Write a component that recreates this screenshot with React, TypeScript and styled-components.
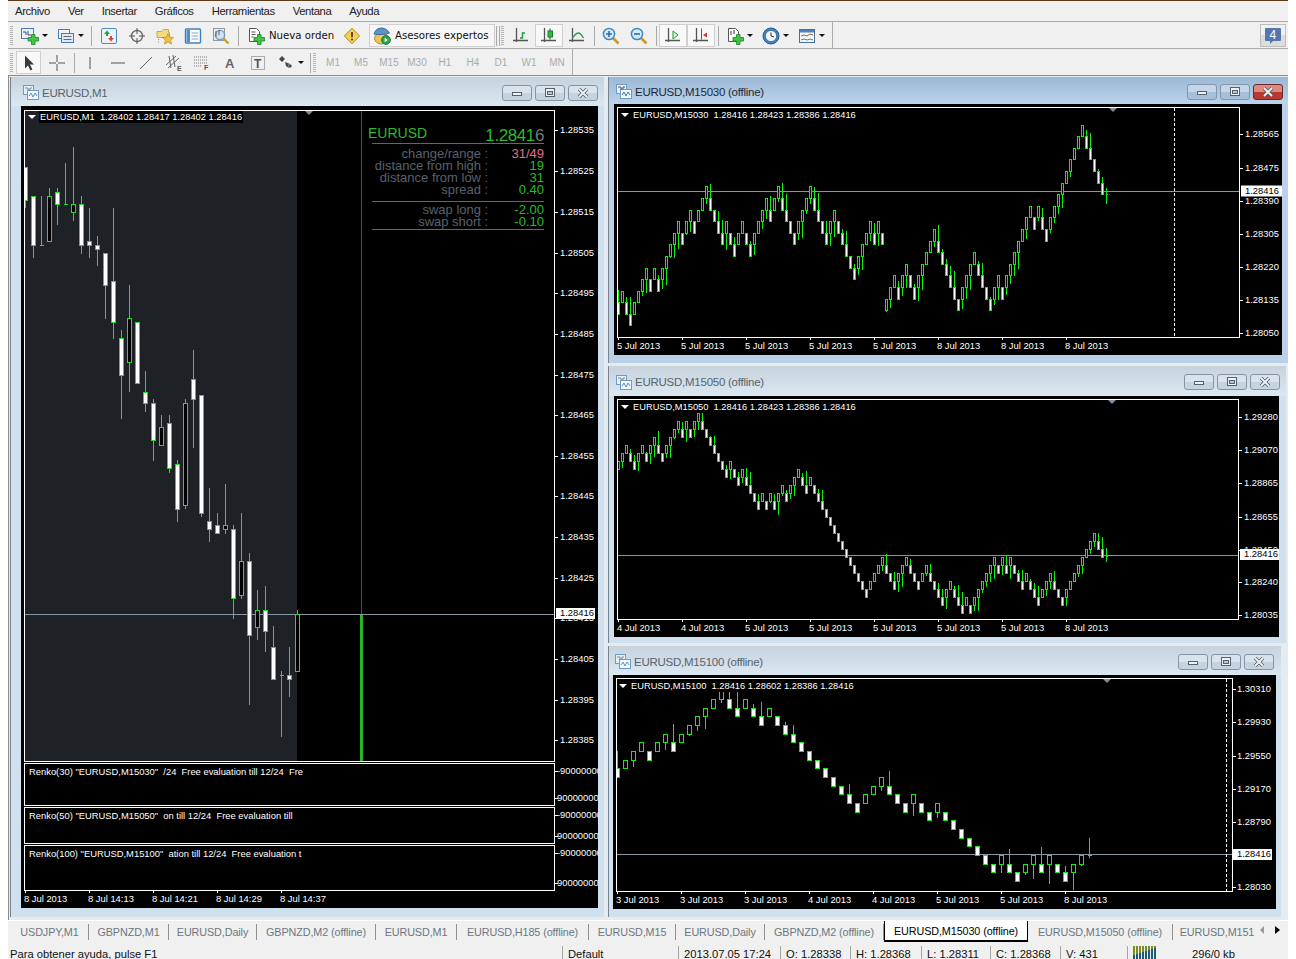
import React from 'react'
import styled, { createGlobalStyle } from 'styled-components'

const GlobalStyle = createGlobalStyle`
  html, body {
    margin: 0;
    background: #fff;
    overflow: hidden;
  }
`

const AppShell = styled.div`
  width: 1280px;
  height: 958px;
  margin: 0 8px;
  border-top: 1px solid #5c3c14;
  background: #f0f0f0;
  display: flex;
  flex-direction: column;
  overflow: hidden;
  font-family: "Liberation Sans", Arial, sans-serif;
  color: #111;
`

/* ---------- menu ---------- */
const MenuBar = styled.div`
  height: 20px;
  flex: none;
  display: flex;
  align-items: center;
  gap: 18px;
  padding-left: 7px;
  font-size: 11.3px;
  letter-spacing: -0.4px;
  color: #222;
`

/* ---------- toolbars ---------- */
const ToolRow = styled.div`
  height: 26px;
  flex: none;
  display: flex;
  align-items: center;
  border-top: 1px solid #aaa;
  padding-left: 2px;
  position: relative;
`
const ToolGroup = styled.div<{ $w: number }>`
  width: ${(p) => p.$w}px;
  height: 26px;
  box-sizing: border-box;
  padding-top: 1px;
  display: flex;
  align-items: center;
  border-right: 1px solid #aaa;
`
const Grip = styled.div`
  width: 3px;
  height: 20px;
  margin: 0 3px 0 0;
  flex: none;
  background: repeating-linear-gradient(to bottom, #b5b5b5 0 1px, transparent 1px 2px);
`
const Tool = styled.div<{ $w?: number; $pressed?: boolean }>`
  width: ${(p) => p.$w ?? 28}px;
  height: 23px;
  flex: none;
  box-sizing: border-box;
  display: flex;
  align-items: center;
  justify-content: center;
  gap: 3px;
  border: 1px solid ${(p) => (p.$pressed ? '#cfcfcf' : 'transparent')};
  background: ${(p) => (p.$pressed ? '#f8f8f8' : 'transparent')};
`
const Caret = styled.span`
  width: 0;
  height: 0;
  border-left: 3px solid transparent;
  border-right: 3px solid transparent;
  border-top: 3px solid #111;
`
const Sep = styled.div<{ $m?: number }>`
  width: 1px;
  height: 20px;
  flex: none;
  background: #a9a9a9;
  margin: 0 ${(p) => p.$m ?? 3}px;
`
const ToolLabel = styled.span`
  font-family: "DejaVu Sans", sans-serif;
  font-size: 10.2px;
  color: #111;
  white-space: nowrap;
`
const TextTool = styled.div<{ $w: number; $boxed?: boolean }>`
  width: ${(p) => p.$w}px;
  height: 23px;
  flex: none;
  box-sizing: border-box;
  display: flex;
  align-items: center;
  gap: 4px;
  margin-left: ${(p) => (p.$boxed ? 4 : 0)}px;
  padding-left: ${(p) => (p.$boxed ? 3 : 4)}px;
  border: 1px solid ${(p) => (p.$boxed ? '#cfcfcf' : 'transparent')};
  background: ${(p) => (p.$boxed ? '#f6f6f6' : 'transparent')};
`
const Period = styled.span`
  width: 28px;
  flex: none;
  text-align: center;
  font-size: 10px;
  color: #ababab;
`
const NoticeButton = styled.div`
  position: absolute;
  right: 2px;
  top: 2px;
  width: 26px;
  height: 23px;
  box-sizing: border-box;
  border: 1px solid #bdbdbd;
  background: linear-gradient(#f1f1f1 50%, #dcdcdc 50%);
  display: flex;
  align-items: center;
  justify-content: center;
`

/* ---------- MDI windows ---------- */
const Desktop = styled.div`
  height: 845px;
  flex: none;
  box-sizing: border-box;
  border-top: 1px solid #8d8d8d;
  border-left: 1px solid #8d8d8d;
  padding: 1px 0 0 1px;
  display: flex;
  gap: 4px;
  background: #e6ebf0;
`
const RightColumn = styled.div`
  display: flex;
  flex-direction: column;
  gap: 3px;
`
const Win = styled.div<{ $w: number; $h: number; $active?: boolean }>`
  width: ${(p) => p.$w}px;
  height: ${(p) => p.$h}px;
  flex: none;
  display: flex;
  flex-direction: column;
  box-sizing: border-box;
  border-left: 1px solid #77828c;
  background: ${(p) => (p.$active ? '#b9d1e9' : '#cfe0ee')};
`
const TitleBar = styled.div<{ $h: number; $pad: number; $active?: boolean }>`
  height: ${(p) => p.$h}px;
  flex: none;
  box-sizing: border-box;
  display: flex;
  align-items: center;
  gap: 3px;
  padding: 2px 0 0 ${(p) => p.$pad}px;
  background: ${(p) =>
    p.$active
      ? 'linear-gradient(#9ab7d4, #bcd4ec)'
      : 'linear-gradient(#c6d3dd, #dbe7f1)'};
`
const TitleText = styled.span<{ $active?: boolean }>`
  flex: 1;
  font-size: 11.5px;
  letter-spacing: -0.25px;
  color: ${(p) => (p.$active ? '#1b2a3a' : '#59636d')};
`
const WinButtons = styled.div<{ $right: number }>`
  display: flex;
  gap: 3px;
  margin-right: ${(p) => p.$right}px;
`
const WinButton = styled.div<{ $close?: boolean; $active?: boolean }>`
  width: 30px;
  height: 16px;
  box-sizing: border-box;
  border: 1px solid ${(p) => (p.$close && p.$active ? '#6b2a30' : '#8595a5')};
  border-radius: 3px;
  display: flex;
  align-items: center;
  justify-content: center;
  background: ${(p) =>
    p.$close && p.$active
      ? 'linear-gradient(#dd8a7e 50%, #b8392e 50%)'
      : p.$active
      ? 'linear-gradient(#c3d6ea 50%, #a6c0da 50%)'
      : 'linear-gradient(#d9e3ec 50%, #c4d3e0 50%)'};
`
const ChartFrame = styled.div<{ $h: number; $ml: number; $mr: number }>`
  height: ${(p) => p.$h}px;
  margin: 0 ${(p) => p.$mr}px 0 ${(p) => p.$ml}px;
  flex: none;
  position: relative;
  background: #000;
  overflow: hidden;
`
const ChartSvg = styled.svg`
  display: block;
  width: 100%;
  height: 100%;
  text {
    font-family: "Liberation Sans", Arial, sans-serif;
    font-size: 9.4px;
    fill: #fff;
    white-space: pre;
  }
`
const Legend = styled.div<{ $left: number }>`
  position: absolute;
  left: ${(p) => p.$left}px;
  top: 5px;
  height: 12px;
  display: flex;
  align-items: center;
  gap: 3px;
  font-size: 9.3px;
  color: #fff;
  white-space: pre;
`
const LegendArrow = styled.span`
  width: 0;
  height: 0;
  border-left: 4px solid transparent;
  border-right: 4px solid transparent;
  border-top: 4px solid #fff;
`
const LegendText = styled.span`
  background: #000;
  padding: 0 1px;
  line-height: 12px;
`

/* ---------- info panel of the M1 chart ---------- */
const InfoPanel = styled.div`
  position: absolute;
  left: 351px;
  top: 20px;
  width: 172px;
  color: #58626c;
  font-size: 13px;
`
const InfoHead = styled.div`
  height: 17px;
  margin-left: -4px;
  display: flex;
  justify-content: space-between;
  align-items: flex-start;
  line-height: 15px;
  color: #2bbb2b;
  font-size: 14px;
`
const InfoPrice = styled.span`
  font-size: 17px;
  letter-spacing: -0.4px;
  line-height: 17px;
  margin-top: 1px;
  span {
    color: #777;
  }
`
const InfoBlock = styled.div`
  border-top: 1px solid #666;
  padding: 4px 0 5px;
  &:last-child {
    border-bottom: 1px solid #666;
    padding: 2px 0 1px;
  }
`
const InfoRow = styled.div`
  display: grid;
  grid-template-columns: 109px 12px 1fr;
  line-height: 12px;
  height: 12px;
  white-space: nowrap;
`
const InfoLabel = styled.span`
  text-align: right;
`
const InfoValue = styled.span<{ $pink?: boolean }>`
  text-align: right;
  color: ${(p) => (p.$pink ? '#e46f8d' : '#2bbb2b')};
`

/* ---------- tabs + status ---------- */
const TabBar = styled.div`
  height: 22px;
  flex: none;
  display: flex;
  align-items: stretch;
  padding-left: 3px;
  position: relative;
  border-top: 1px solid #fff;
`
const Tab = styled.div<{ $w: number; $active?: boolean; $last?: boolean }>`
  width: ${(p) => p.$w}px;
  flex: none;
  box-sizing: border-box;
  display: flex;
  align-items: center;
  justify-content: center;
  font-size: 10.8px;
  letter-spacing: -0.1px;
  white-space: nowrap;
  overflow: hidden;
  margin-top: ${(p) => (p.$active ? 0 : 3)}px;
  margin-bottom: ${(p) => (p.$active ? 1 : 3)}px;
  color: ${(p) => (p.$active ? '#000' : '#6c7680')};
  background: ${(p) => (p.$active ? '#fff' : 'transparent')};
  border-right: ${(p) => (p.$last ? '0' : `1px solid ${p.$active ? '#000' : '#8f8f8f'}`)};
  border-left: ${(p) => (p.$active ? '1px solid #000' : '0')};
  border-bottom: ${(p) => (p.$active ? '2px solid #000' : '0')};
`
const TabArrows = styled.div`
  position: absolute;
  right: 8px;
  top: 5px;
  display: flex;
  gap: 11px;
  align-items: center;
`
const TabArrow = styled.span<{ $right?: boolean; $off?: boolean }>`
  width: 0;
  height: 0;
  border-top: 4px solid transparent;
  border-bottom: 4px solid transparent;
  border-left: ${(p) => (p.$right ? `5px solid ${p.$off ? '#999' : '#000'}` : '0')};
  border-right: ${(p) => (p.$right ? '0' : `4px solid ${p.$off ? '#999' : '#000'}`)};
`
const StatusBar = styled.div`
  flex: 1;
  display: flex;
  align-items: flex-start;
  padding-top: 3px;
  font-size: 11.2px;
  color: #111;
  position: relative;
`
const StatusCell = styled.div<{ $w: number; $first?: boolean }>`
  width: ${(p) => p.$w}px;
  height: 14px;
  flex: none;
  box-sizing: border-box;
  padding-left: ${(p) => (p.$first ? 2 : 5)}px;
  border-left: ${(p) => (p.$first ? '0' : '1px solid #a4a4a4')};
  line-height: 16px;
  white-space: nowrap;
`
const StatusBars = styled.svg`
  display: block;
`

/* ---------- icons ---------- */
const Ico: React.FC<{ children: React.ReactNode; s?: number }> = ({ children, s = 18 }) => (
  <svg width={s} height={s} viewBox="0 0 18 18">
    {children}
  </svg>
)
const GreenPlus = () => (
  <path d="M10.5 7.5h3.5v3h3.5v3.5h-3.5v3.5h-3.5v-3.5h-3.5v-3.5h3.5z" fill="#42c642" stroke="#1f7f2a" strokeWidth="0.8" />
)
const Axes = ({ c = '#555' }: { c?: string }) => (
  <path d="M4.5 1v14M1 13.5h15" stroke={c} strokeWidth="1.3" fill="none" />
)
const NewChartIcon = () => (
  <Ico>
    <rect x="0.5" y="1.5" width="12" height="10" fill="#e8f1fb" stroke="#4a7db5" />
    <path d="M2 5h3v3M7 4v4h3" stroke="#456" fill="none" />
    <GreenPlus />
  </Ico>
)
const ProfilesIcon = () => (
  <Ico>
    <rect x="1.5" y="2.5" width="11" height="9" fill="#eef4fb" stroke="#4a7db5" />
    <rect x="4.5" y="6.5" width="12" height="9" fill="#dfeaf7" stroke="#4a7db5" />
    <path d="M6.5 9.5h8M6.5 12.5h8" stroke="#667" />
  </Ico>
)
const MarketIcon = () => (
  <Ico>
    <rect x="1.5" y="1.5" width="15" height="15" rx="1.5" fill="#eaf3fb" stroke="#4f8cc0" />
    <path d="M7 3.5l3 3.5h-2v2h-2v-2h-2z" fill="#30a030" />
    <path d="M11 14.5l-3-3.5h2v-2h2v2h2z" fill="#d24b36" />
  </Ico>
)
const CrosshairIcon = () => (
  <Ico>
    <circle cx="9" cy="9" r="5.5" fill="none" stroke="#6c6c6c" strokeWidth="1.4" />
    <path d="M9 1v6M9 11v6M1 9h6M11 9h6" stroke="#555" />
  </Ico>
)
const FolderStarIcon = () => (
  <Ico>
    <path d="M1 4.5h5l1.5-2h5v3h1v5H1z" fill="#f5dc84" stroke="#bd9a3a" strokeWidth="0.8" />
    <path d="M12 6.5l1.7 3.7 3.8.4-2.9 2.6.9 3.9-3.5-2-3.5 2 .9-3.9-2.9-2.6 3.8-.4z" fill="#f4c23e" stroke="#b98a20" strokeWidth="0.7" />
    <path d="M2 12.5h1M2 15h1" stroke="#888" />
  </Ico>
)
const NavigatorIcon = () => (
  <Ico>
    <rect x="1.5" y="2" width="15" height="14" rx="1" fill="#fff" stroke="#3f7fbe" strokeWidth="1.4" />
    <rect x="2.5" y="3" width="3.5" height="12" fill="#4f90cf" />
    <path d="M7.5 6h7M7.5 9h7M7.5 12h7" stroke="#7fa6c9" />
  </Ico>
)
const TesterIcon = () => (
  <Ico>
    <rect x="1.5" y="1.5" width="11" height="12" fill="#e8ecf0" stroke="#8f9aa5" />
    <circle cx="8" cy="8" r="4.6" fill="#cfe2f4" stroke="#7d98b3" strokeWidth="1.3" />
    <path d="M4 4v6M7 3v5" stroke="#567" />
    <path d="M11.5 11.5l5 5" stroke="#c79a2c" strokeWidth="2.2" />
  </Ico>
)
const NewOrderIcon = () => (
  <Ico>
    <path d="M2.5 1.5h7l3 3v10h-10z" fill="#fff" stroke="#555" />
    <path d="M4.5 5h4M4.5 7.5h4M4.5 10h2" stroke="#555" />
    <GreenPlus />
  </Ico>
)
const WarningIcon = () => (
  <Ico>
    <path d="M9 1.2l7.6 7.8L9 16.8 1.4 9z" fill="#f7d24c" stroke="#a98a34" />
    <path d="M9 5v5.2" stroke="#533" strokeWidth="1.8" />
    <circle cx="9" cy="12.6" r="1" fill="#533" />
  </Ico>
)
const ExpertIcon = () => (
  <Ico>
    <ellipse cx="8.5" cy="11.5" rx="7" ry="5.5" fill="#e8c65a" stroke="#a88a30" />
    <path d="M1 7c1-4 4-6 7.5-6s6 2 8 5c-4 1.6-11 2-15.5 1z" fill="#5c93c8" stroke="#3a6c9c" />
    <circle cx="13" cy="13" r="4.4" fill="#2ea44a" stroke="#1d7a34" />
    <path d="M11.7 10.8l3.3 2.2-3.3 2.2z" fill="#fff" />
  </Ico>
)
const BarsIcon = () => (
  <Ico>
    <Axes />
    <path d="M8 11h2.5V6H13" stroke="#1d9a3a" strokeWidth="1.4" fill="none" />
  </Ico>
)
const CandleIcon = () => (
  <Ico>
    <Axes />
    <path d="M10 1.5v11" stroke="#333" />
    <rect x="8" y="4" width="4.5" height="6" fill="#26c43a" stroke="#14802a" />
  </Ico>
)
const LineChartIcon = () => (
  <Ico>
    <Axes />
    <path d="M4.5 11c2-3 4-5 6-5s3 2 5 5" stroke="#2a9a58" strokeWidth="1.3" fill="none" />
  </Ico>
)
const LensIcon = ({ minus }: { minus?: boolean }) => (
  <Ico>
    <path d="M10.5 10.5l6 6" stroke="#c89b2b" strokeWidth="2.6" />
    <circle cx="7" cy="7" r="5.6" fill="#d6e9fa" stroke="#3d87c4" strokeWidth="1.5" />
    <path d={minus ? 'M4 7h6' : 'M4 7h6M7 4v6'} stroke="#2c6ea8" strokeWidth="1.6" />
  </Ico>
)
const ScrollIcon = () => (
  <Ico>
    <Axes />
    <path d="M9 4l5 4-5 4z" fill="#d8f5d8" stroke="#209a3a" />
  </Ico>
)
const ShiftIcon = () => (
  <Ico>
    <Axes />
    <path d="M9.5 1.5v11" stroke="#365f8f" />
    <path d="M11 8l4-2.5v5z" fill="#c8382a" />
  </Ico>
)
const AddIcon = () => (
  <Ico>
    <path d="M2.5 1.5h7l3 3v10h-10z" fill="#fff" stroke="#555" />
    <path d="M5 4v4M8 3v4" stroke="#333" fill="none" />
    <GreenPlus />
  </Ico>
)
const ClockIcon = () => (
  <Ico>
    <circle cx="9" cy="9" r="8" fill="#3f86c8" stroke="#27598c" />
    <circle cx="9" cy="9" r="5.6" fill="#f2f6fa" stroke="#1f4a78" strokeWidth="0.6" />
    <path d="M9 5.5V9l3 1" stroke="#333" fill="none" />
  </Ico>
)
const TemplateIcon = () => (
  <Ico>
    <rect x="1.5" y="2.5" width="15" height="13" fill="#f6f8fb" stroke="#4a6f96" />
    <rect x="2" y="3" width="14" height="2.5" fill="#4d86bd" />
    <path d="M3 9l3-1 3 1 3-2 3 1" stroke="#b5582f" fill="none" />
    <path d="M3 13l3-1 3 1 3-1 3 1" stroke="#3a9a4a" fill="none" />
  </Ico>
)
const CursorIcon = () => (
  <Ico>
    <path d="M5 1.5l0 13 3-3 2.4 5 2-1-2.4-5h4z" fill="#3a3a3a" />
  </Ico>
)
const CrossIcon = () => (
  <Ico>
    <path d="M9 1v7M9 10v7M1 9h7M10 9h7" stroke="#555" />
  </Ico>
)
const VLineIcon = () => (
  <Ico>
    <path d="M9 3v12" stroke="#555" />
  </Ico>
)
const HLineIcon = () => (
  <Ico>
    <path d="M2 9h14" stroke="#555" />
  </Ico>
)
const TrendIcon = () => (
  <Ico>
    <path d="M3 15L15 3" stroke="#666" />
  </Ico>
)
const GlyphLetter = styled.text`
  font-family: "Liberation Sans", sans-serif;
  font-size: 7px;
  font-weight: 700;
  fill: #555;
`
const ChannelIcon = () => (
  <Ico>
    <path d="M1 11L11 2M3 14L14 4M4 2l2 12M8 1l2 12" stroke="#666" fill="none" />
    <GlyphLetter x="12" y="17">E</GlyphLetter>
  </Ico>
)
const FiboIcon = () => (
  <Ico>
    <path d="M1 3h13M1 6h13M1 9h13M1 12h8" stroke="#777" strokeDasharray="1 1" />
    <GlyphLetter x="11" y="16">F</GlyphLetter>
  </Ico>
)
const TextAIcon = () => (
  <Ico>
    <text x="4" y="14" fontFamily="Liberation Sans, sans-serif" fontSize="13" fontWeight="700" fill="#666">A</text>
  </Ico>
)
const TextTIcon = () => (
  <Ico>
    <rect x="2.5" y="2.5" width="13" height="13" fill="none" stroke="#666" strokeDasharray="1 1" />
    <text x="5" y="14" fontFamily="Liberation Sans, sans-serif" fontSize="12" fontWeight="700" fill="#555">T</text>
  </Ico>
)
const ArrowsIcon = () => (
  <Ico>
    <path d="M2 5l3-3 3 3-3 3zM8 8l5 2-2 1 1 3-3-2z" fill="#444" />
    <path d="M11 12l2 2 2-2-2-2z" fill="#444" />
  </Ico>
)
const WindowGlyphIcon = ({ dim }: { dim?: boolean }) => (
  <svg width="16" height="15" viewBox="0 0 16 15">
    <rect x="0.5" y="0.5" width="10" height="9" fill="#e6f0fa" stroke="#6d9bc7" />
    <rect x="4.5" y="5.5" width="11" height="9" fill="#f4f8fc" stroke="#6d9bc7" />
    <path d="M2 3h3v2h2V3h2" stroke={dim ? '#7b8a99' : '#556'} fill="none" />
    <path d="M6 11l2-3 2 4 2-4 2 3" stroke={dim ? '#5c90bd' : '#3c78ad'} fill="none" />
  </svg>
)
const MinGlyph = () => (
  <svg width="12" height="8" viewBox="0 0 12 8">
    <rect x="1.5" y="3.5" width="9" height="3" fill="#eef2f6" stroke="#56606a" />
  </svg>
)
const MaxGlyph = () => (
  <svg width="12" height="10" viewBox="0 0 12 10">
    <rect x="1.5" y="0.5" width="9" height="8" fill="#eef2f6" stroke="#56606a" />
    <rect x="3.5" y="3.5" width="5" height="3" fill="#b7c6d4" stroke="#56606a" />
  </svg>
)
const CloseGlyph = () => (
  <svg width="12" height="10" viewBox="0 0 12 10">
    <path d="M2 1l8 8M10 1l-8 8" stroke="#4c5660" strokeWidth="3.4" />
    <path d="M2 1l8 8M10 1l-8 8" stroke="#f4f6f8" strokeWidth="1.8" />
  </svg>
)

/* ---------- chart data ---------- */
type Candle = { x: number; h: number; t: number; b: number; l: number; kind: 'w' | 'b' | 'd' }

// i, high, body top, body bottom, low, kind
const m1Rows: [number, number, number, number, number, Candle['kind']][] = [
  [0, 167, 167, 200, 208, 'w'], [1, 196, 196, 245, 258, 'w'], [2, 196, 245, 245, 245, 'd'],
  [3, 188, 196, 241, 241, 'b'], [4, 188, 192, 204, 225, 'w'], [5, 163, 204, 204, 204, 'd'],
  [6, 147, 204, 212, 221, 'b'], [7, 196, 204, 245, 254, 'w'], [8, 208, 241, 245, 258, 'w'],
  [9, 236, 245, 249, 266, 'w'], [10, 253, 253, 285, 319, 'w'], [11, 208, 281, 322, 339, 'w'],
  [12, 330, 338, 375, 419, 'w'], [13, 285, 318, 362, 392, 'b'], [14, 322, 322, 383, 383, 'w'],
  [15, 371, 392, 403, 412, 'w'], [16, 399, 403, 440, 461, 'w'], [17, 415, 427, 445, 445, 'b'],
  [18, 415, 423, 468, 473, 'w'], [19, 460, 464, 509, 522, 'w'], [20, 399, 403, 505, 509, 'b'],
  [21, 350, 379, 399, 448, 'w'], [22, 395, 395, 513, 517, 'w'], [23, 488, 521, 529, 542, 'w'],
  [24, 513, 525, 533, 533, 'w'], [25, 484, 525, 529, 534, 'b'], [26, 525, 529, 598, 619, 'w'],
  [27, 513, 561, 595, 599, 'b'], [28, 553, 561, 635, 705, 'w'], [29, 590, 610, 627, 640, 'b'],
  [30, 586, 610, 631, 652, 'w'], [31, 626, 647, 679, 679, 'w'], [32, 671, 675, 675, 737, 'd'],
  [33, 647, 675, 679, 697, 'w'], [34, 610, 614, 671, 671, 'b'],
]
const m1Candles: Candle[] = m1Rows.map(([i, h, t, b, l, kind]) => ({ x: 25 + 8 * i, h, t, b, l, kind }))

// u / d: brick up or down; a capital letter is a brick without a wick
const renko = (
  startX: number,
  stepX: number,
  stepY: number,
  startY: number,
  moves: string,
  seed: number,
  reach: number,
): Candle[] => {
  let hi = startY
  let lo = startY
  return moves
    .replace(/\s/g, '')
    .split('')
    .map((m, i) => {
      const up = m.toLowerCase() === 'u'
      const t = up ? hi - stepY : lo
      const b = up ? hi : lo + stepY
      hi = t
      lo = b
      const r = ((i + seed) * 29 + (i * i) % 11) % 23
      const wick = r < 8 || m !== m.toLowerCase() ? 0 : ((r - 6) * reach) / 17
      return {
        x: startX + stepX * i,
        h: up ? t : t - wick,
        t,
        b,
        l: up ? b + wick : b,
        kind: up ? ('b' as const) : ('w' as const),
      }
    })
}

const m30Moves1 =
  'd u d d u u u u d u d u u u u u d u u d u u u d d d d u d d u u d d u u u u d u u d d d d u u u u d d d d u u d d d d d u u u u d u d'
const m30Moves2 =
  'u u u d u u d d u u u u u d d d d d d u u u u d d d d u u d u u u u u u u d u d d u u u u u u u u u d d d d d'
const m30Candles: Candle[] = [
  ...renko(618.67, 4, 11.58, 302.3, m30Moves1, 3, 18),
  ...renko(886.67, 4, 11.6, 310.3, m30Moves2, 9, 18),
  { x: 1106.67, h: 188, t: 194, b: 194, l: 204, kind: 'd' },
]

const m50Moves =
  'u u u d d u u d u u d d u u u u d u d u u d d d d d d d u d d u d d d d u d u d u u d u u u d d u d' +
  ' d d D D D D D D D D D D D u u u u d d d u u u d d d u u d d d' +
  ' d u u d d d u d u u u u u u d u d u d d d u d d d u u u d d d u u u u u u u u d d'
const m50Candles: Candle[] = [
  ...renko(618.67, 4, 8, 469.3, m50Moves, 5, 15),
  { x: 1106.67, h: 548, t: 556, b: 556, l: 562, kind: 'd' },
]

const m100Moves =
  'd u u u d u u d u u u u u u d d u d d u d d d D D D D d D d D u u u d d' +
  ' D u D D u D D D D D D D u d d u u d u d d u u'
const m100Candles: Candle[] = [
  ...renko(617.33, 8, 8.67, 768.3, m100Moves, 7, 22),
  { x: 1089.33, h: 838, t: 855, b: 855, l: 858, kind: 'd' },
]

const Series: React.FC<{ data: Candle[]; half: number; color?: string }> = ({ data, half, color = '#0ef00e' }) => (
  <g shapeRendering="crispEdges">
    {data.map((c, i) => {
      const x = Math.floor(c.x) + 0.5
      const t = Math.round(c.t) + 0.5
      const b = Math.round(c.b) + 0.5
      return (
        <g key={i}>
          <line x1={x} x2={x} y1={c.h} y2={t} stroke={color} />
          <line x1={x} x2={x} y1={b} y2={c.l} stroke={color} />
          {c.kind === 'd' ? (
            <line x1={x - half} x2={x + half} y1={t} y2={t} stroke={color} />
          ) : (
            <rect
              x={x - half}
              y={t}
              width={half * 2}
              height={Math.max(b - t, 1)}
              fill={c.kind === 'w' ? '#fff' : '#000'}
              stroke={color}
            />
          )}
        </g>
      )
    })}
  </g>
)

type Mark = { label: string; at: number }

const PriceAxis: React.FC<{ x: number; marks: Mark[]; labelX?: number }> = ({ x, marks, labelX }) => (
  <g>
    {marks.map((m) => (
      <g key={m.label + m.at}>
        <line x1={x} x2={x + 3} y1={Math.round(m.at) + 0.5} y2={Math.round(m.at) + 0.5} stroke="#fff" shapeRendering="crispEdges" />
        <text x={labelX ?? x + 6} y={m.at + 2.5}>{m.label}</text>
      </g>
    ))}
  </g>
)
const PriceTag: React.FC<{ x: number; y: number; w: number; label: string }> = ({ x, y, w, label }) => (
  <g>
    <rect x={x} y={y - 5} width={w} height={11} fill="#fff" />
    <text x={x + 4} y={y + 3} style={{ fill: '#000' }}>{label}</text>
  </g>
)
const TimeAxis: React.FC<{ y: number; tickY: number; marks: Mark[] }> = ({ y, tickY, marks }) => (
  <g>
    {marks.map((m) => (
      <g key={m.label + m.at}>
        <line x1={m.at + 1.5} x2={m.at + 1.5} y1={tickY} y2={tickY + 3} stroke="#fff" shapeRendering="crispEdges" />
        <text x={m.at} y={y + 2.5}>{m.label}</text>
      </g>
    ))}
  </g>
)
const PlotBox: React.FC<{ x0: number; y0: number; x1: number; y1: number }> = ({ x0, y0, x1, y1 }) => (
  <rect x={x0 + 0.5} y={y0 + 0.5} width={x1 - x0} height={y1 - y0} fill="none" stroke="#fff" shapeRendering="crispEdges" />
)
const PriceLine: React.FC<{ x0: number; x1: number; y: number }> = ({ x0, x1, y }) => (
  <line x1={x0} x2={x1} y1={y + 0.5} y2={y + 0.5} stroke="#8a97a3" shapeRendering="crispEdges" />
)
const Notch: React.FC<{ x: number; y: number }> = ({ x, y }) => (
  <polygon points={`${x - 4},${y + 1} ${x + 4},${y + 1} ${x},${y + 5}`} fill="#7f8c99" />
)
const Dashed: React.FC<{ x: number; y0: number; y1: number }> = ({ x, y0, y1 }) => (
  <line x1={x + 0.5} x2={x + 0.5} y1={y0} y2={y1} stroke="#fff" strokeDasharray="3 2" shapeRendering="crispEdges" />
)

const dates = (rows: string[], y = 617) => rows.map((d, i) => ({ label: `${d} Jul 2013`, at: y + i * 64 }))

const Candles: React.FC<{ id: string; x0: number; y0: number; x1: number; y1: number; children: React.ReactNode }> = ({
  id, x0, y0, x1, y1, children,
}) => (
  <g>
    <clipPath id={id}>
      <rect x={x0} y={y0} width={x1 - x0} height={y1 - y0} />
    </clipPath>
    <g clipPath={`url(#${id})`}>{children}</g>
  </g>
)

const MainChart = () => {
  const prices = [535, 525, 515, 505, 495, 485, 475, 465, 455, 445, 435, 425, 415, 405, 395, 385]
  const ys = [130, 171, 212, 253, 293, 334, 375, 415, 456, 496, 537, 578, 618, 659, 700, 740]
  return (
    <>
      <ChartSvg viewBox="21 106 577 802">
        <rect x="25" y="111" width="272" height="650" fill="#1e2226" />
        <line x1="361.5" x2="361.5" y1="111" y2="614" stroke="#167d16" />
        <rect x="360" y="614" width="3" height="147" fill="#28b428" />
        <PriceLine x0={25} x1={554} y={614} />
        <Candles id="m1clip" x0={25} y0={111} x1={554} y1={761}>
          <Series data={m1Candles} half={2} color="#17e617" />
        </Candles>
        <PlotBox x0={24} y0={110} x1={554} y1={761} />
        <PlotBox x0={24} y0={763} x1={554} y1={805} />
        <PlotBox x0={24} y0={807} x1={554} y1={843} />
        <PlotBox x0={24} y0={845} x1={554} y1={890} />
        <Notch x={309} y={110} />
        <PriceAxis x={555} labelX={560} marks={prices.map((p, i) => ({ label: `1.28${p}`, at: ys[i] }))} />
        <PriceTag x={556} y={613} w={39} label="1.28416" />
        <PriceAxis
          x={555}
          labelX={557}
          marks={[
            { label: '-90000000', at: 771 },
            { label: '90000000', at: 798 },
            { label: '-90000000', at: 815 },
            { label: '90000000', at: 836 },
            { label: '-90000000', at: 853 },
            { label: '90000000', at: 883 },
          ]}
        />
        <text x="29" y="775">{'Renko(30) "EURUSD,M15030"  /24  Free evaluation till 12/24  Fre'}</text>
        <text x="29" y="819">{'Renko(50) "EURUSD,M15050"  on till 12/24  Free evaluation till'}</text>
        <text x="29" y="857">{'Renko(100) "EURUSD,M15100"  ation till 12/24  Free evaluation t'}</text>
        <TimeAxis
          y={899}
          tickY={890}
          marks={[
            { label: '8 Jul 2013', at: 24 },
            { label: '8 Jul 14:13', at: 88 },
            { label: '8 Jul 14:21', at: 152 },
            { label: '8 Jul 14:29', at: 216 },
            { label: '8 Jul 14:37', at: 280 },
          ]}
        />
      </ChartSvg>
      <Legend $left={7}>
        <LegendArrow />
        <LegendText>{'EURUSD,M1  1.28402 1.28417 1.28402 1.28416'}</LegendText>
      </Legend>
      <InfoPanel>
        <InfoHead>
          <span>EURUSD</span>
          <InfoPrice>
            1.2841<span>6</span>
          </InfoPrice>
        </InfoHead>
        <InfoBlock>
          {[
            ['change/range', '31/49'],
            ['distance from high', '19'],
            ['distance from low', '31'],
            ['spread', '0.40'],
          ].map(([label, value], i) => (
            <InfoRow key={label}>
              <InfoLabel>{label}</InfoLabel>
              <span>&nbsp;:</span>
              <InfoValue $pink={i === 0}>{value}</InfoValue>
            </InfoRow>
          ))}
        </InfoBlock>
        <InfoBlock>
          {[
            ['swap long', '-2.00'],
            ['swap short', '-0.10'],
          ].map(([label, value]) => (
            <InfoRow key={label}>
              <InfoLabel>{label}</InfoLabel>
              <span>&nbsp;:</span>
              <InfoValue>{value}</InfoValue>
            </InfoRow>
          ))}
        </InfoBlock>
      </InfoPanel>
    </>
  )
}

const Chart15030 = () => (
  <>
    <ChartSvg viewBox="614 104 668 251">
      <PriceLine x0={617} x1={1239} y={191} />
      <Candles id="c30" x0={618} y0={108} x1={1239} y1={337}>
        <Series data={m30Candles} half={1} />
      </Candles>
      <Dashed x={1174} y0={108} y1={337} />
      <PlotBox x0={617} y0={107} x1={1239} y1={337} />
      <Notch x={1113} y={107} />
      <PriceAxis
        x={1240}
        labelX={1245}
        marks={[
          { label: '1.28565', at: 134 }, { label: '1.28475', at: 168 }, { label: '1.28390', at: 201 },
          { label: '1.28305', at: 234 }, { label: '1.28220', at: 267 }, { label: '1.28135', at: 300 },
          { label: '1.28050', at: 333 },
        ]}
      />
      <PriceTag x={1241} y={190.5} w={41} label="1.28416" />
      <TimeAxis y={346} tickY={337} marks={dates(['5', '5', '5', '5', '5', '8', '8', '8'])} />
    </ChartSvg>
    <Legend $left={7}>
      <LegendArrow />
      <LegendText>{'EURUSD,M15030  1.28416 1.28423 1.28386 1.28416'}</LegendText>
    </Legend>
  </>
)

const Chart15050 = () => (
  <>
    <ChartSvg viewBox="614 396 665 241">
      <PriceLine x0={617} x1={1238} y={555} />
      <Candles id="c50" x0={618} y0={400} x1={1238} y1={619}>
        <Series data={m50Candles} half={1} />
      </Candles>
      <PlotBox x0={617} y0={399} x1={1238} y1={619} />
      <Notch x={1112} y={399} />
      <PriceAxis
        x={1239}
        labelX={1244}
        marks={[
          { label: '1.29280', at: 417 }, { label: '1.29070', at: 450 }, { label: '1.28865', at: 483 },
          { label: '1.28655', at: 517 }, { label: '1.28450', at: 550 }, { label: '1.28240', at: 582 },
          { label: '1.28035', at: 615 },
        ]}
      />
      <PriceTag x={1240} y={554} w={39} label="1.28416" />
      <TimeAxis y={628} tickY={619} marks={dates(['4', '4', '5', '5', '5', '5', '5', '8'])} />
    </ChartSvg>
    <Legend $left={7}>
      <LegendArrow />
      <LegendText>{'EURUSD,M15050  1.28416 1.28423 1.28386 1.28416'}</LegendText>
    </Legend>
  </>
)

const Chart15100 = () => (
  <>
    <ChartSvg viewBox="613 675 663 234">
      <PriceLine x0={616} x1={1232} y={854} />
      <Candles id="c100" x0={617} y0={679} x1={1232} y1={891}>
        <Series data={m100Candles} half={2} />
      </Candles>
      <Dashed x={1226} y0={679} y1={891} />
      <PlotBox x0={616} y0={678} x1={1232} y1={891} />
      <Notch x={1107} y={678} />
      <PriceAxis
        x={1233}
        labelX={1237}
        marks={[
          { label: '1.30310', at: 689 }, { label: '1.29930', at: 722 }, { label: '1.29550', at: 756 },
          { label: '1.29170', at: 789 }, { label: '1.28790', at: 822 }, { label: '1.28030', at: 887 },
        ]}
      />
      <PriceTag x={1233} y={854} w={39} label="1.28416" />
      <TimeAxis y={900} tickY={891} marks={dates(['3', '3', '3', '4', '4', '5', '5', '8'], 616)} />
    </ChartSvg>
    <Legend $left={6}>
      <LegendArrow />
      <LegendText>{'EURUSD,M15100  1.28416 1.28602 1.28386 1.28416'}</LegendText>
    </Legend>
  </>
)

const ChartWindow: React.FC<{
  title: string
  w: number
  h: number
  titleH: number
  pad: number
  btnRight: number
  chartH: number
  ml: number
  mr: number
  active?: boolean
  children: React.ReactNode
}> = ({ title, w, h, titleH, pad, btnRight, chartH, ml, mr, active, children }) => (
  <Win $w={w} $h={h} $active={active}>
    <TitleBar $h={titleH} $pad={pad} $active={active}>
      <WindowGlyphIcon dim={!active} />
      <TitleText $active={active}>{title}</TitleText>
      <WinButtons $right={btnRight}>
        <WinButton $active={active}><MinGlyph /></WinButton>
        <WinButton $active={active}><MaxGlyph /></WinButton>
        <WinButton $active={active} $close><CloseGlyph /></WinButton>
      </WinButtons>
    </TitleBar>
    <ChartFrame $h={chartH} $ml={ml} $mr={mr}>
      {children}
    </ChartFrame>
  </Win>
)

const tabs: { label: string; w: number; active?: boolean; last?: boolean }[] = [
  { label: 'USDJPY,M1', w: 78 },
  { label: 'GBPNZD,M1', w: 80 },
  { label: 'EURUSD,Daily', w: 88 },
  { label: 'GBPNZD,M2 (offline)', w: 119 },
  { label: 'EURUSD,M1', w: 81 },
  { label: 'EURUSD,H185 (offline)', w: 132 },
  { label: 'EURUSD,M15', w: 87 },
  { label: 'EURUSD,Daily', w: 89 },
  { label: 'GBPNZD,M2 (offline)', w: 119 },
  { label: 'EURUSD,M15030 (offline)', w: 144, active: true },
  { label: 'EURUSD,M15050 (offline)', w: 145 },
  { label: 'EURUSD,M151', w: 88, last: true },
]

export default function App() {
  return (
    <AppShell>
      <GlobalStyle />
      <MenuBar>
        {['Archivo', 'Ver', 'Insertar', 'Gráficos', 'Herramientas', 'Ventana', 'Ayuda'].map((m) => (
          <span key={m}>{m}</span>
        ))}
      </MenuBar>
      <ToolRow>
        <ToolGroup $w={823}>
          <Grip />
          <Tool $w={36}><NewChartIcon /><Caret /></Tool>
          <Tool $w={36}><ProfilesIcon /><Caret /></Tool>
          <Sep />
          <Tool><MarketIcon /></Tool>
          <Tool><CrosshairIcon /></Tool>
          <Tool><FolderStarIcon /></Tool>
          <Tool><NavigatorIcon /></Tool>
          <Tool><TesterIcon /></Tool>
          <Sep />
          <TextTool $w={97}>
            <NewOrderIcon />
            <ToolLabel>Nueva orden</ToolLabel>
          </TextTool>
          <Tool $w={26}><WarningIcon /></Tool>
          <TextTool $w={126} $boxed>
            <ExpertIcon />
            <ToolLabel>Asesores expertos</ToolLabel>
          </TextTool>
          <Sep $m={1} />
          <Sep $m={1} />
          <Grip />
          <Tool><BarsIcon /></Tool>
          <Tool $pressed><CandleIcon /></Tool>
          <Tool><LineChartIcon /></Tool>
          <Sep $m={2.5} />
          <Tool><LensIcon /></Tool>
          <Tool><LensIcon minus /></Tool>
          <Sep $m={2.5} />
          <Tool $pressed><ScrollIcon /></Tool>
          <Tool $pressed><ShiftIcon /></Tool>
          <Sep />
          <Tool $w={35}><AddIcon /><Caret /></Tool>
          <Tool $w={37}><ClockIcon /><Caret /></Tool>
          <Tool $w={35}><TemplateIcon /><Caret /></Tool>
        </ToolGroup>
        <NoticeButton>
          <svg width="18" height="18" viewBox="0 0 18 18">
            <path d="M2 1h14a1 1 0 0 1 1 1v11a1 1 0 0 1-1 1H9l-3 3v-3H2a1 1 0 0 1-1-1V2a1 1 0 0 1 1-1z" fill="#5577b0" />
            <text x="5.5" y="12" fontFamily="Liberation Sans, sans-serif" fontSize="12" fill="#fff">4</text>
          </svg>
        </NoticeButton>
      </ToolRow>
      <ToolRow>
        <ToolGroup $w={563}>
          <Grip />
          <Tool $w={25} $pressed><CursorIcon /></Tool>
          <Tool $w={32}><CrossIcon /></Tool>
          <Sep $m={1} />
          <Tool><VLineIcon /></Tool>
          <Tool><HLineIcon /></Tool>
          <Tool><TrendIcon /></Tool>
          <Tool><ChannelIcon /></Tool>
          <Tool><FiboIcon /></Tool>
          <Tool><TextAIcon /></Tool>
          <Tool><TextTIcon /></Tool>
          <Tool $w={36}><ArrowsIcon /><Caret /></Tool>
          <Sep $m={2} />
          <Grip />
          {['M1', 'M5', 'M15', 'M30', 'H1', 'H4', 'D1', 'W1', 'MN'].map((p) => (
            <Period key={p}>{p}</Period>
          ))}
        </ToolGroup>
      </ToolRow>
      <Desktop>
        <ChartWindow
          title="EURUSD,M1"
          w={594}
          h={840}
          titleH={29}
          pad={12}
          btnRight={6}
          chartH={802}
          ml={10}
          mr={6}
        >
          <MainChart />
        </ChartWindow>
        <RightColumn>
          <ChartWindow
            title="EURUSD,M15030 (offline)"
            w={680}
            h={286}
            titleH={27}
            pad={7}
            btnRight={5}
            chartH={251}
            ml={5}
            mr={6}
            active
          >
            <Chart15030 />
          </ChartWindow>
          <ChartWindow
            title="EURUSD,M15050 (offline)"
            w={678}
            h={277}
            titleH={30}
            pad={7}
            btnRight={6}
            chartH={241}
            ml={5}
            mr={7}
          >
            <Chart15050 />
          </ChartWindow>
          <ChartWindow
            title="EURUSD,M15100 (offline)"
            w={673}
            h={271}
            titleH={29}
            pad={6}
            btnRight={7}
            chartH={234}
            ml={4}
            mr={5}
          >
            <Chart15100 />
          </ChartWindow>
        </RightColumn>
      </Desktop>
      <TabBar>
        {tabs.map((t, i) => (
          <Tab key={t.label + i} $w={t.w} $active={t.active} $last={t.last}>{t.label}</Tab>
        ))}
        <TabArrows>
          <TabArrow $off />
          <TabArrow $right />
        </TabArrows>
      </TabBar>
      <StatusBar>
        <StatusCell $w={554} $first>Para obtener ayuda, pulse F1</StatusCell>
        <StatusCell $w={116}>Default</StatusCell>
        <StatusCell $w={102}>2013.07.05 17:24</StatusCell>
        <StatusCell $w={70}>O: 1.28338</StatusCell>
        <StatusCell $w={71}>H: 1.28368</StatusCell>
        <StatusCell $w={69}>L: 1.28311</StatusCell>
        <StatusCell $w={70}>C: 1.28368</StatusCell>
        <StatusCell $w={67}>V: 431</StatusCell>
        <StatusCell $w={63}>
          <StatusBars width="24" height="13" viewBox="0 0 24 13">
            {[0, 3, 6, 9, 12, 15, 18, 21].map((x, i) => (
              <g key={x}>
                <rect x={x} y={0} width="2" height={9 - i} fill="#7c8c1e" />
                <rect x={x} y={9 - i} width="2" height={4 + i} fill="#1d5b7a" />
              </g>
            ))}
          </StatusBars>
        </StatusCell>
        <StatusCell $w={60} $first>296/0 kb</StatusCell>
      </StatusBar>
    </AppShell>
  )
}
